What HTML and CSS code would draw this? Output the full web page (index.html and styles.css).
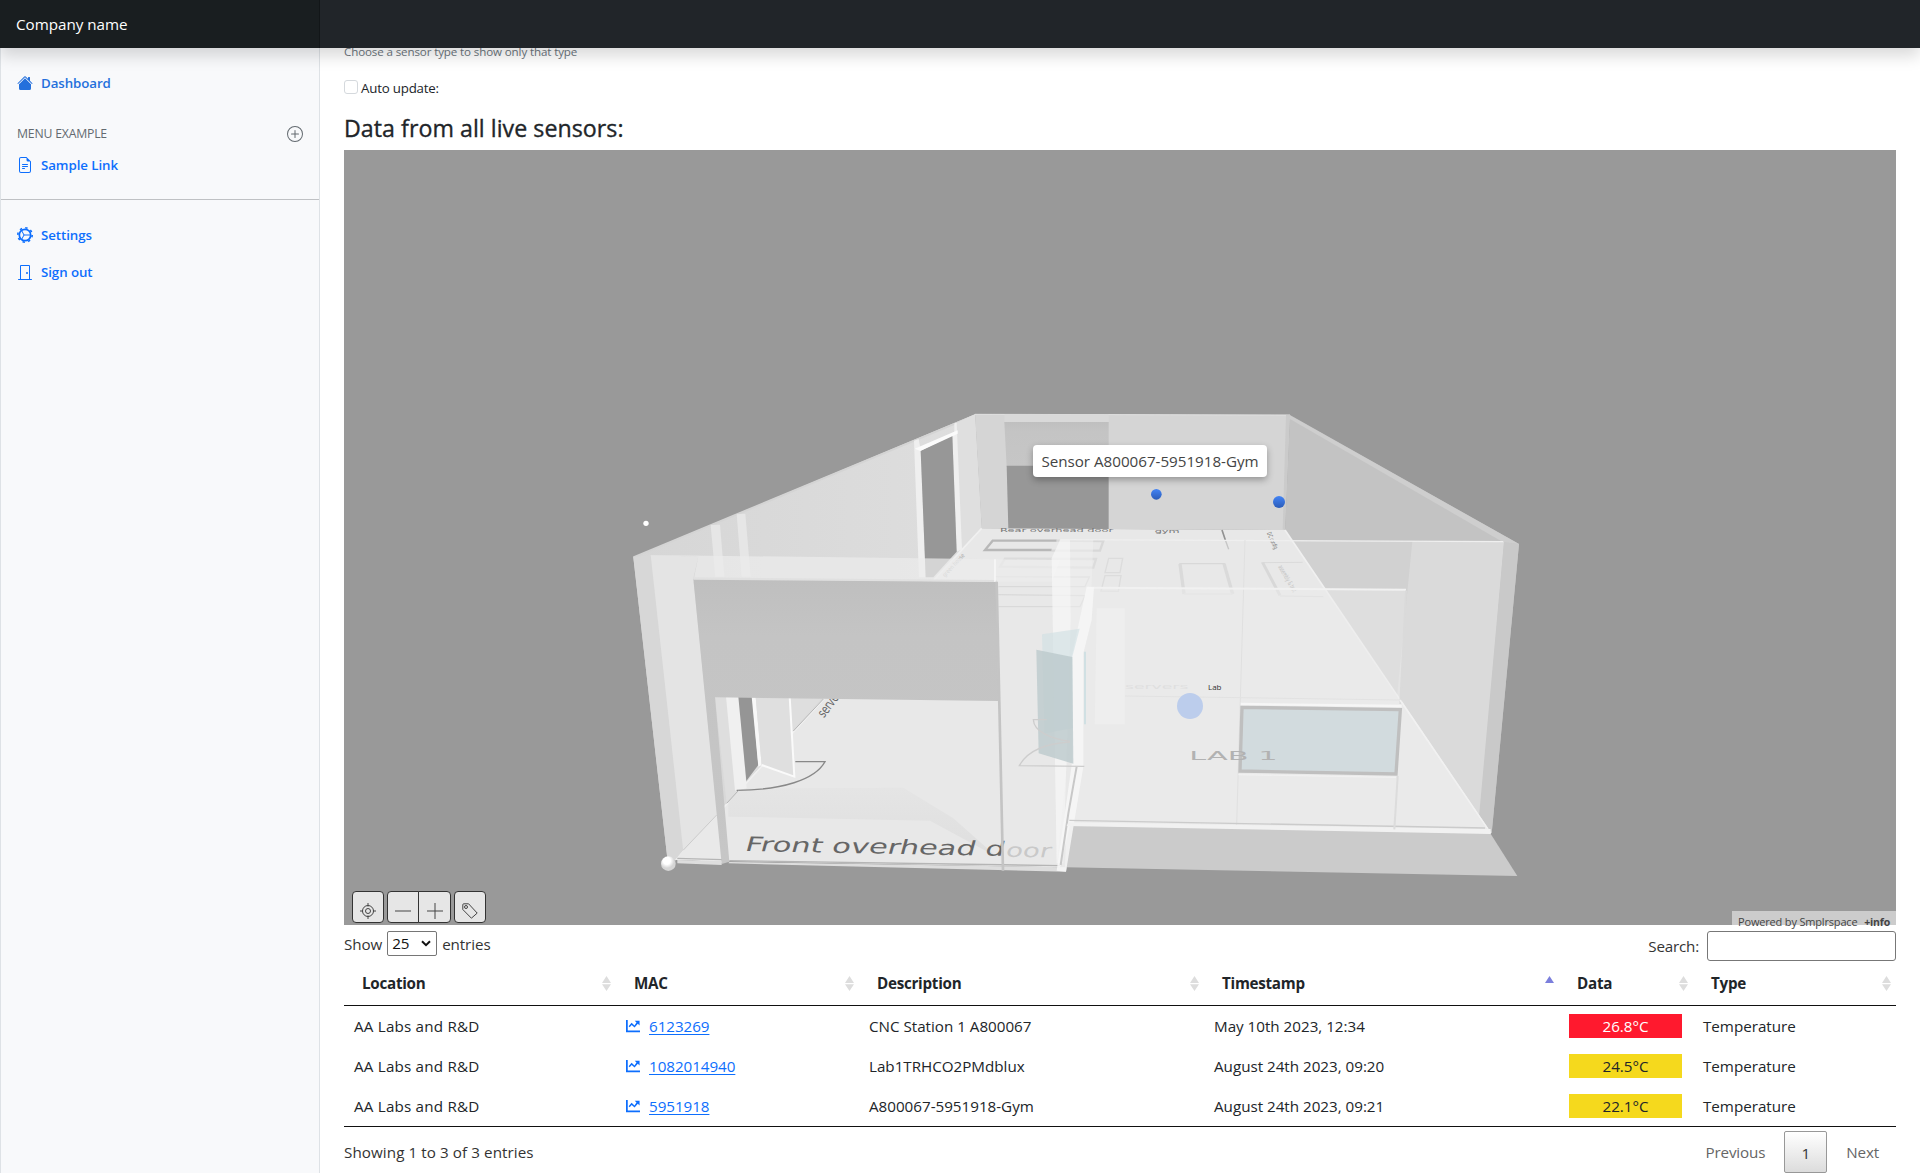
FILE: index.html
```html
<!DOCTYPE html>
<html lang="en">
<head>
<meta charset="utf-8">
<title>Dashboard</title>
<link rel="stylesheet" href="styles.css">
</head>
<body>
<svg class="defs" width="0" height="0" aria-hidden="true">
  <symbol id="chart" viewBox="0 0 16 16"><path fill-rule="evenodd" d="M0 1h2v12h14v2H0zM10 2h5.500v5.500l-2-2-3.700 4.300-3.300-3L4.200 9.500 3 8.300l3.400-4 3.300 3L12 4z"/></symbol>
  <symbol id="sort" viewBox="0 0 9 15"><path d="M4.500 0 9 7H0zM0 8.200h9L4.500 15z"/></symbol>
</svg>
<header class="topbar"><a class="brand">Company name</a></header>
<div class="layout">
  <nav class="sidebar">
    <a class="nav-link active"><svg class="icon" viewBox="0 0 16 16"><path d="M8.707 1.500a1 1 0 0 0-1.414 0L.646 8.146a.5.5 0 0 0 .708.708L8 2.207l6.646 6.647a.5.5 0 0 0 .708-.708L13 5.793V2.500a.5.5 0 0 0-.5-.5h-1a.5.5 0 0 0-.5.5v1.293z"/><path d="m8 3.293 6 6V13.500a1.500 1.500 0 0 1-1.500 1.500h-9A1.500 1.500 0 0 1 2 13.500V9.293z"/></svg>Dashboard</a>
    <h6 class="nav-title"><span>Menu example</span><svg class="icon" viewBox="0 0 16 16"><path d="M8 15A7 7 0 1 1 8 1a7 7 0 0 1 0 14m0 1A8 8 0 1 0 8 0a8 8 0 0 0 0 16"/><path d="M8 4a.5.5 0 0 1 .5.5v3h3a.5.5 0 0 1 0 1h-3v3a.5.5 0 0 1-1 0v-3h-3a.5.5 0 0 1 0-1h3v-3A.5.5 0 0 1 8 4"/></svg></h6>
    <a class="nav-link sample"><svg class="icon" viewBox="0 0 16 16"><path d="M5.500 7a.5.5 0 0 0 0 1h5a.5.5 0 0 0 0-1zM5 9.500a.5.5 0 0 1 .5-.5h5a.5.5 0 0 1 0 1h-5a.5.5 0 0 1-.5-.5m0 2a.5.5 0 0 1 .5-.5h2a.5.5 0 0 1 0 1h-2a.5.5 0 0 1-.5-.5"/><path d="M9.500 0H4a2 2 0 0 0-2 2v12a2 2 0 0 0 2 2h8a2 2 0 0 0 2-2V4.500zm0 1v2A1.500 1.500 0 0 0 11 4.500h2V14a1 1 0 0 1-1 1H4a1 1 0 0 1-1-1V2a1 1 0 0 1 1-1z"/></svg>Sample Link</a>
    <hr>
    <a class="nav-link"><svg class="icon gear" viewBox="0 0 16 16"><circle cx="8" cy="8" r="5.700" stroke-width="1.700"/><circle cx="8" cy="8" r="7.200" stroke-width="1.600" stroke-dasharray="2.400 3.255"/><path d="M7 8 4.800 3.900M7 8l-2.200 4.100M7 8h6" stroke-width="1"/></svg>Settings</a>
    <a class="nav-link"><svg class="icon" viewBox="0 0 16 16"><path d="M3 2a1 1 0 0 1 1-1h8a1 1 0 0 1 1 1v13h1.500a.5.5 0 0 1 0 1h-13a.5.5 0 0 1 0-1H3zm1 13h8V2H4z"/><circle cx="10" cy="9" r="1"/></svg>Sign out</a>
  </nav>
  <main class="content">
    <div class="hint"><span>Choose a sensor type to show only that type</span></div>
    <label class="auto"><input type="checkbox"><span>Auto update:</span></label>
    <h2><span>Data from all live sensors:</span></h2>
    <section class="viewer">
      <svg class="scene" viewBox="-828 -750 4656 2325">
        <defs>
          <linearGradient id="panel" x2="0" y2="1"><stop offset="0" stop-color="#bfbfbf"/><stop offset=".2" stop-color="#c4c4c4"/><stop offset="1" stop-color="#c6c6c6"/></linearGradient>
          <linearGradient id="side" gradientUnits="userSpaceOnUse" x1="40" x2="1085"><stop offset="0" stop-color="#d6d6d6"/><stop offset=".5" stop-color="#dadada"/><stop offset="1" stop-color="#dedede"/></linearGradient>
          <linearGradient id="shade" x2="0" y2="1"><stop offset="0" stop-color="#e5e5e5"/><stop offset="1" stop-color="#dedede"/></linearGradient>
          <linearGradient id="ball" x2="0" y2="1"><stop offset="0" stop-color="#4384f5"/><stop offset="1" stop-color="#2b5cb8"/></linearGradient>
          <radialGradient id="knob" cx=".4" cy=".3"><stop offset=".5" stop-color="#fff"/><stop offset="1" stop-color="#d5d5d5"/></radialGradient>
        </defs>
        <!-- apron, outer walls -->
        <path fill="#cbcbcb" d="M1340 1270 2608 1295 2692 1428 1335 1402z"/>
        <path fill="url(#side)" d="M40 472 1065 43 1085 385 320 1210 165 1380 142 1375z"/>
        <path fill="none" stroke="#d4d4d4" stroke-width="6" d="M40 472 1065 46"/>
        <path fill="#d5d5d5" d="M1065 43 2010 45 1995 390 1085 385z"/>
        <path fill="none" stroke="#e2e2e2" stroke-width="3" d="M1065 43 2010 45"/>
        <path fill="#dfdfdf" d="M1006 70 1065 43 1085 385 1025 450z"/>
        <path fill="#d9d9d9" d="M1153 43h313v23h-313z"/>
        <path fill="url(#panel)" d="M1153 66h313v135h-306z"/>
        <path fill="#979797" d="M1160 197h306v190h-301z"/>
        <path fill="#c3c3c3" d="M2010 45 2697 432 2615 1300 1995 390z"/>
        <path fill="#cecece" d="M2008 45 2697 432 2652 428 2006 55z"/>
        <path fill="#cbcbcb" d="M2010 45 1995 390 1988 388 1998 45z"/>
        <path fill="#d1d1d1" d="M2000 420 2652 426 2580 1245 2015 420z"/>
        <path fill="#dadada" d="M2377 424 2652 426 2580 1255 2330 900z"/>
        <path fill="#c9c9c9" d="M2652 426 2697 432 2615 1300 2577 1250z"/>
        <!-- floor -->
        <path fill="#e8e8e8" d="M1085 385 1995 390 2610 1300 1350 1275 1320 1402 165 1380 320 1210z"/>
        <path fill="none" stroke="#f0f0f0" stroke-width="5" d="M1995 390 2612 1300M1085 385 165 1380"/>
        <path fill="url(#shade)" d="M325 1165 850 1163 1000 1255 1130 1370 930 1262 325 1250z"/>
        <g fill="none" stroke="#cacaca" stroke-width="7">
          <path d="M1310 422H1118L1095 450H1295" stroke="#b8b8b8"/>
          <path d="M1310 422 1450 423 1440 452H1295" stroke="#d8d8d8"/>
          <path d="M1155 476 1428 477 1420 503 1140 500z" stroke="#dcdcdc"/>
          <path d="M1125 530 1408 531 1395 560H1135M1135 584 1395 587 1380 620H1135" stroke="#d9d9d9" stroke-width="4"/>
          <path d="M1466 475 1508 475 1500 518 1455 518zM1455 527 1503 527 1495 574 1443 573z" stroke="#dcdcdc" stroke-width="4"/>
          <path d="M1678 491H1815" stroke="#d8d8d8" stroke-width="4"/>
          <path d="m1680 491 12 91M1812 491l26 91" stroke="#dadada" stroke-width="10"/>
          <path d="M1692 582h146" stroke="#e0e0e0" stroke-width="4"/>
          <path d="M1924 488 2048 487M1980 588 2110 590" stroke="#dadada" stroke-width="3"/>
          <path d="m1928 488 52 98" stroke="#d8d8d8" stroke-width="9"/>
        </g>
        <path fill="none" stroke="#929292" stroke-width="5" d="m1806 390 10 30"/>
        <path fill="none" stroke="#c5c5c5" stroke-width="4" d="m1816 420 10 28"/>
        <g class="plan" fill="#777">
          <text transform="translate(1140 396) scale(1 .45)" font-size="33" textLength="340" lengthAdjust="spacingAndGlyphs">Rear overhead door</text>
          <text transform="translate(1604 399) scale(1 .45)" font-size="33" textLength="75" lengthAdjust="spacingAndGlyphs">gym</text>
          <text transform="translate(1940 400) rotate(65)" font-size="19" textLength="54" lengthAdjust="spacingAndGlyphs">DC config</text>
          <text transform="translate(1974 500) rotate(60)" font-size="20" fill="#c0c0c0" textLength="90" lengthAdjust="spacingAndGlyphs">assembly &amp; test</text>
          <text transform="translate(975 532) rotate(-47)" font-size="18" textLength="88" fill="#aaa" lengthAdjust="spacingAndGlyphs">green house</text>
        </g>
        <!-- left doorway -->
        <path fill="#efefef" d="M882 122 896 117 902 150 1003 95 1003 70 1010 68 1026 448 1010 455 997 106 902 152 917 532H897z"/>
        <path fill="#979797" d="M902 152 997 106 1010 455 940 532H917z"/>
        <path fill="#fbfbfb" d="M884 146 1013 91 1013 101 901 153z"/>
        <path fill="#e6e6e6" d="M272 375 300 374 313 530 286 530zM350 343 376 341 392 530 365 530z"/>
        <!-- front wall -->
        <path fill="#d7d7d7" d="M40 472 92 465 190 1350 165 1380 142 1375z"/>
        <path fill="#e4e4e4" d="M92 465 235 470 220 535 292 1245 190 1355z"/>
        <path fill="#ececec" fill-opacity=".72" d="M92 465 1320 480 1295 545H220L235 470z"/>
        <path fill="#e9e9e9" d="M170 1375 290 1245 305 1390z"/>
        <!-- inside the overhead door -->
        <path fill="#dedede" d="M285 890h325L320 1210z"/>
        <path fill="#f0f0f0" d="M318 890h40l22 275-35 7z"/>
        <path fill="#959595" d="M355 890h42l18 205-36 48z"/>
        <path fill="#f8f8f8" d="M395 890h12l18 205-10 5z"/>
        <path fill="#dfdfdf" d="M407 890h102l14 240-98-35z"/>
        <path fill="none" stroke="#fafafa" stroke-width="6" d="m509 890 14 240-98-35"/>
        <path fill="none" stroke="#888" stroke-width="4" d="M526 1085h89c-30 55-130 85-265 86"/>
        <path fill="none" stroke="#b5b5b5" stroke-width="3" d="M610 897 520 993M355 1172 320 1210"/>
        <path fill="none" stroke="#ccc" stroke-width="3" d="M290 1245 190 1350"/>
        <g class="plan" fill="#666">
          <text transform="translate(612 955) rotate(-53)" font-size="40" textLength="76" lengthAdjust="spacingAndGlyphs">serve</text>
        </g>
        <path fill="url(#panel)" d="M220 537 1130 545 1135 903 285 892 328 1385 305 1392z"/>
        <path fill="#e0e0e0" d="M220 532 1130 540V546L220 539z"/>
        <path fill="none" stroke="#b5b5b5" stroke-width="4" d="M172 1375 305 1379M328 1382 1320 1397"/>
        <path fill="#ddd" d="M172 1380 305 1383v12L172 1390zM328 1386 1340 1402 1338 1415 325 1390z"/>
        <g class="plan" fill="#666">
          <text class="door" transform="translate(372 1353) rotate(1.100) skewX(-14)" font-size="60" textLength="778" lengthAdjust="spacingAndGlyphs">Front overhead d</text>
          <text class="door" transform="translate(1155 1370) rotate(.8) skewX(-12)" font-size="57" fill="#c9c9c9" textLength="135" lengthAdjust="spacingAndGlyphs">oor</text>
        </g>
        <!-- middle partition -->
        <path fill="#f0f0f0" fill-opacity=".5" d="M1295 475 1320 417 1420 420 1415 560 1390 620 1310 1395z"/>
        <path fill="#fff" fill-opacity=".4" d="M1295 475 1322 417 1350 420 1352 660 1330 1390H1310z"/>
        <path fill="none" stroke="#efefef" stroke-width="4" d="M1322 419 2650 425"/>
        <path fill="none" stroke="#f7f7f7" stroke-width="5" d="M1125 478V545"/>
        <path fill="#ececec" fill-opacity=".5" d="M1400 563 2358 569 2340 900 2612 1300 1340 1275 1360 1095z"/>
        <path fill="none" stroke="#e0e0e0" stroke-width="3" d="M1875 420 1850 1275"/>
        <path fill="none" stroke="#f1f1f1" stroke-width="6" d="M1400 563 2358 569"/>
        <path fill="none" stroke="#dadada" stroke-width="6" d="m2358 572-17 340"/>
        <path fill="#efefef" d="M1430 625h84v348h-90z" opacity=".8"/>
        <path fill="none" stroke="#e2e2e2" stroke-width="3" d="M1515 888 2340 900"/>
        <path fill="#f7f7f7" fill-opacity=".85" d="M1400 560 1422 562 1415 660 1390 760 1390 1100 1338 1415 1310 1412 1355 1095V770z"/>
        <path fill="none" stroke="#c8c8c8" stroke-width="6" d="M1370 1100 1345 1240 1322 1395"/>
        <path fill="#cfdfe2" fill-opacity=".6" d="M1266 703 1379 686 1357 770 1358 985 1274 1000z"/>
        <path fill="#bbc9cc" fill-opacity=".8" d="M1249 749 1357 771 1360 1091 1256 1060z"/>
        <path fill="#d0e0e3" d="M1392 755h6v218h-6z"/>
        <path fill="none" stroke="#cdcdcd" stroke-width="4" d="M1350 1024c-60-8-108-30-110-65h40M1350 1026c-80 5-130 30-152 71l195 2"/>
        <path fill="none" stroke="#c4c4c4" stroke-width="8" d="M1130 545 1149 1412"/>
        <!-- lab -->
        <path fill="#f1f1f1" d="M1345 1267 2612 1287V1302L1340 1278z"/>
        <path fill="none" stroke="#cbcbcb" stroke-width="4" d="M1348 1261 2595 1284"/>
        <path fill="none" stroke="#f6f6f6" stroke-width="7" d="M1862 912 2345 918"/>
        <path fill="#d2dbde" stroke="#bfbfbf" stroke-width="10" d="M1866 922 2341 929 2328 1122 1860 1113z"/>
        <path fill="none" stroke="#dcdcdc" stroke-width="6" d="m2333 1128-10 160"/>
        <path fill="none" stroke="#f1f1f1" stroke-width="4" d="m2340 900 262 385M1855 1124 2328 1132"/>
        <g class="plan">
          <text x="1708" y="1080" font-size="37" fill="#b2b2b2" textLength="265" lengthAdjust="spacingAndGlyphs">LAB 1</text>
          <text x="1515" y="868" font-size="22" fill="#dfdfdf" textLength="190" lengthAdjust="spacingAndGlyphs">servers</text>
        </g>
        <!-- markers -->
        <circle cx="78" cy="370" r="8" fill="#fff"/>
        <circle cx="145" cy="1391" r="22" fill="url(#knob)"/>
        <circle cx="1609" cy="283" r="16" fill="url(#ball)"/>
        <circle cx="1977" cy="306" r="18" fill="url(#ball)"/>
        <circle cx="1710" cy="918" r="39" fill="#bccdec"/>
      </svg>
      <span class="lab">Lab</span>
      <div class="tooltip"><span>Sensor A800067-5951918-Gym</span></div>
      <div class="tools">
        <button><svg viewBox="0 0 16 16"><circle cx="8" cy="8" r="5.500"/><circle cx="8" cy="8" r="2.500"/><path d="M8 0v3.500M8 12.500V16M0 8h3M13 8h3"/></svg></button>
        <div class="group"><button><svg viewBox="0 0 16 16"><path d="M0 8h16"/></svg></button><button><svg viewBox="0 0 16 16"><path d="M0 8h16M8 0v16"/></svg></button></div>
        <button><svg viewBox="0 0 16 16"><path d="M.8 1.800v4.700l8.600 8.700 5.800-5.100L6.600.8H1.800q-1 0-1 1z"/><circle cx="4" cy="4" r="1.500"/></svg></button>
      </div>
      <div class="powered"><span>Powered by Smplrspace</span><b>+info</b></div>
    </section>
    <div class="controls">
      <label class="length"><span>Show</span><span class="select">25<svg viewBox="0 0 10 7"><path d="m1 1.200 4 4 4-4"/></svg></span><span>entries</span></label>
      <label class="search"><span>Search:</span><input type="text"></label>
    </div>
    <table>
      <colgroup><col class="c1"><col class="c2"><col class="c3"><col class="c4"><col class="c5"><col class="c6"></colgroup>
      <thead><tr>
        <th><div>Location<svg class="sort"><use href="#sort"/></svg></div></th>
        <th><div>MAC<svg class="sort"><use href="#sort"/></svg></div></th>
        <th><div>Description<svg class="sort"><use href="#sort"/></svg></div></th>
        <th><div>Timestamp<svg class="sort asc" viewBox="0 0 9 15"><path d="M4.500 0 9 7H0z"/></svg></div></th>
        <th><div>Data<svg class="sort"><use href="#sort"/></svg></div></th>
        <th><div>Type<svg class="sort"><use href="#sort"/></svg></div></th>
      </tr></thead>
      <tbody>
        <tr><td>AA Labs and R&amp;D</td><td><svg class="chart"><use href="#chart"/></svg><a>6123269</a></td><td>CNC Station 1 A800067</td><td>May 10th 2023, 12:34</td><td><span class="value hot">26.8°C</span></td><td>Temperature</td></tr>
        <tr><td>AA Labs and R&amp;D</td><td><svg class="chart"><use href="#chart"/></svg><a>1082014940</a></td><td>Lab1TRHCO2PMdblux</td><td>August 24th 2023, 09:20</td><td><span class="value">24.5°C</span></td><td>Temperature</td></tr>
        <tr><td>AA Labs and R&amp;D</td><td><svg class="chart"><use href="#chart"/></svg><a>5951918</a></td><td>A800067-5951918-Gym</td><td>August 24th 2023, 09:21</td><td><span class="value">22.1°C</span></td><td>Temperature</td></tr>
      </tbody>
    </table>
    <footer class="foot">
      <span class="info">Showing 1 to 3 of 3 entries</span>
      <div class="pager"><a>Previous</a><a class="current">1</a><a>Next</a></div>
    </footer>
  </main>
</div>
</body>
</html>
```
FILE: styles.css
```css
* { box-sizing: border-box; }
html, body { height: 100%; }
body { margin: 0; overflow: hidden; display: flex; flex-direction: column; background: #fff; color: #212529; font: 15.2px/24px "Open Sans", "Noto Sans", sans-serif; letter-spacing: -.1px; }
.defs { display: none; }
.topbar { position: relative; z-index: 2; flex: none; height: 48px; background: #212529; box-shadow: 0 8px 16px rgba(0,0,0,.15); display: flex; }
.brand { width: 320px; padding: 12px 16px; background: #191e20; color: #fff; box-shadow: inset -1px 0 0 rgba(0,0,0,.25); letter-spacing: -.02px; }
.layout { display: flex; flex: 1; min-height: 0; }
.sidebar { width: 320px; flex: none; background: #f8f9fb; border: solid #dee2e6; border-width: 0 1px; padding-top: 16px; font-size: 13.300px; }
.nav-link { display: flex; align-items: center; gap: 8px; height: 37px; padding: 0 16px; color: #0d6efd; font-weight: 600; letter-spacing: -.08px; }
.nav-link.active { color: #2470dc; }
.icon { width: 16px; height: 16px; fill: currentColor; }
.icon.gear { fill: none; stroke: currentColor; }
.nav-title { display: flex; justify-content: space-between; align-items: center; height: 24px; margin: 20px 16px 0; padding-top: 1px; color: #636a70; font-size: 12.250px; font-weight: 400; letter-spacing: -.2px; text-transform: uppercase; }
.nav-link.sample { margin-top: 1px; }
hr { margin: 16px 0 16px; border: 0; border-top: 1px solid #bfc1c4; }
.content { flex: 1; padding: 0 24px; display: flex; flex-direction: column; min-width: 0; }
.hint { height: 8px; display: flex; align-items: center; color: #6c757d; font-size: 11.600px; letter-spacing: -.13px; white-space: nowrap; }
.auto { height: 24px; margin-top: 20px; display: flex; align-items: center; gap: 3px; font-size: 13.300px; letter-spacing: -.2px; }
.auto input { appearance: none; width: 14px; height: 14px; margin: 0 0 3px; border: 1px solid #d5d9dd; border-radius: 3px; }
h2 { height: 30px; margin: 13px 0 7px; font-size: 23.200px; line-height: 30px; font-weight: 500; letter-spacing: .04px; -webkit-text-stroke: .35px; }
.viewer { position: relative; flex: none; height: 775px; background: #999; }
.scene { display: block; width: 1552px; height: 775px; }
.plan { font-family: "DejaVu Sans", sans-serif; letter-spacing: 0; }
.lab { position: absolute; left: 864px; top: 529px; color: #333; font-size: 8px; line-height: 15px; letter-spacing: 0; }
.tooltip { position: absolute; left: 689px; top: 295px; width: 234px; height: 32px; border-radius: 4px; background: #fff; color: #444; line-height: 33px; letter-spacing: -.02px; text-align: center; box-shadow: 0 3px 7px rgba(0,0,0,.3); white-space: nowrap; }
.tools { position: absolute; left: 8px; bottom: 2px; display: flex; gap: 3px; }
.tools button { width: 32px; height: 32px; padding: 7px 0 0; border: 1px solid #333; border-radius: 4px; background: #e6e6e6; display: flex; align-items: center; justify-content: center; }
.tools svg { width: 16px; height: 16px; fill: none; stroke: #444; stroke-width: 1; }
.group { display: flex; }
.group button:first-child { border-radius: 4px 0 0 4px; }
.group button:last-child { border-radius: 0 4px 4px 0; margin-left: -1px; width: 33px; }
.powered { position: absolute; right: 0; bottom: 0; width: 164px; height: 14px; padding: 0 6px; background: #ccc; color: #444; font-size: 11px; line-height: 22px; letter-spacing: -.17px; display: flex; justify-content: space-between; white-space: nowrap; }
.powered b { font-weight: 700; font-size: 10.500px; }
.controls { display: flex; justify-content: space-between; height: 38px; padding-top: 6px; color: #333; }
.length { display: flex; gap: 5px; line-height: 27px; }
.select { width: 50px; height: 25px; padding: 0 5px 0 4px; border: 1px solid #767676; border-radius: 2px; display: flex; justify-content: space-between; align-items: center; color: #111; }
.select svg { width: 10px; height: 7px; fill: none; stroke: #111; stroke-width: 2; }
.search { display: flex; gap: 8px; line-height: 31px; letter-spacing: -.2px; }
.search input { width: 189px; height: 30px; border: 1px solid #777; border-radius: 3px; }
table { flex: none; width: 1552px; table-layout: fixed; border-collapse: separate; border-spacing: 0; border-bottom: 1px solid #111; }
.c1 { width: 272px; } .c2 { width: 243px; } .c3 { width: 345px; } .c4 { width: 355px; } .c5 { width: 134px; } .c6 { width: 203px; }
th { height: 43px; padding: 0 5px 2px 18px; border-bottom: 1px solid #111; text-align: left; font-weight: 700; letter-spacing: -.27px; }
th div { display: flex; justify-content: space-between; align-items: center; }
.sort { width: 9px; height: 15px; fill: #ddd; }
.sort.asc { fill: #7b7fdc; }
td { height: 40px; padding: 0 10px 1px; letter-spacing: -.01px; }
td:first-child { letter-spacing: .2px; }
td a { color: #0d6efd; text-decoration: underline; text-underline-offset: 2px; }
.chart { width: 16px; height: 14px; fill: #0d6efd; margin: 0 8px 0 -1px; vertical-align: -1px; }
td a { letter-spacing: -.05px; }
.value { display: block; width: 113px; height: 24px; background: #f5d91d; color: #212529; text-align: center; }
.value.hot { background: #ff192e; color: #fff; }
.foot { display: flex; justify-content: space-between; height: 46px; padding-top: 4px; color: #333; }
.info { line-height: 42px; letter-spacing: .08px; }
.pager { display: flex; line-height: 42px; color: #666; letter-spacing: -.15px; }
.pager a { padding: 0 17px; }
.pager .current { width: 43px; height: 42px; padding: 0; margin: 0 2px; border: 1px solid #989898; border-radius: 2px; background: linear-gradient(#fff, #dcdcdc); color: #333; text-align: center; }
```
